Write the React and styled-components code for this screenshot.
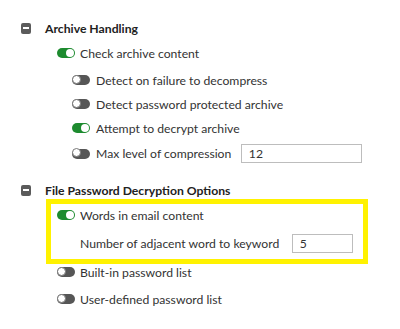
import React from "react";
import styled, { createGlobalStyle } from "styled-components";

const GlobalStyle = createGlobalStyle`
    body {
        margin: 0;
        background: #fff;
        font-family: "Lato", "Liberation Sans", sans-serif;
        font-size: 12.2px;
        color: #333;
    }
`;

const Page = styled.div`
    width: 400px;
    height: 329px;
    padding-top: 20px;
    box-sizing: border-box;
    overflow: hidden;
`;

const SectionHead = styled.div`
    display: flex;
    align-items: center;
    height: 16px;
    padding-left: 21px;
    margin-top: ${(p) => p.$top || 0}px;
    font-weight: bold;
    color: #222;
`;

const Collapse = styled.span`
    position: relative;
    width: 10px;
    height: 11px;
    border-radius: 2px;
    background: #5b5b5b;
    margin-right: 14px;
    flex-shrink: 0;
    &::after {
        content: "";
        position: absolute;
        left: 2px;
        right: 2px;
        top: 4.5px;
        height: 2px;
        background: #fff;
    }
`;

const List = styled.div`
    display: flex;
    flex-direction: column;
    gap: ${(p) => p.$gap || 0}px;
    padding-left: ${(p) => p.$indent || 0}px;
    margin-top: ${(p) => p.$top || 0}px;
`;

const Row = styled.div`
    display: flex;
    align-items: center;
    min-height: 16px;
    white-space: nowrap;
    padding-left: ${(p) => p.$indent || 0}px;
`;

const Toggle = styled.span`
    position: relative;
    width: 18px;
    height: 10px;
    border-radius: 5px;
    flex-shrink: 0;
    margin-right: ${(p) => p.$gap || 5}px;
    background: ${(p) => (p.$on ? "#1d8b2f" : "#565656")};
    &::after {
        content: "";
        position: absolute;
        top: ${(p) => (p.$on ? 1 : -0.5)}px;
        left: ${(p) => (p.$on ? 9 : -0.5)}px;
        width: ${(p) => (p.$on ? 8 : 9)}px;
        height: ${(p) => (p.$on ? 8 : 9)}px;
        border-radius: 50%;
        background: #fff;
        box-sizing: border-box;
        border: ${(p) => (p.$on ? "none" : "1px solid #777")};
    }
`;

const NumberInput = styled.input`
    box-sizing: border-box;
    width: ${(p) => p.$w}px;
    height: 19px;
    margin-left: ${(p) => p.$left}px;
    padding: 0 7px;
    border: 1px solid #bdbdbd;
    border-radius: 0;
    font-family: "Lato", "Liberation Sans", sans-serif;
    font-size: 12.2px;
    color: #333;
    outline: none;
`;

const Highlight = styled.div`
    width: 322px;
    box-sizing: border-box;
    margin-left: 46px;
    margin-top: 1px;
    border: 5px solid #fff200;
    padding: 3px 0 6px 6px;
    display: flex;
    flex-direction: column;
    gap: 11px;
`;

const Option = ({ on, gap, children }) => (
    <Row>
        <Toggle $on={on} $gap={gap} />
        {children}
    </Row>
);

export default function App() {
    return (
        <Page>
            <GlobalStyle />
            <SectionHead>
                <Collapse />
                Archive Handling
            </SectionHead>
            <List $indent={57} $top={9}>
                <Option on>Check archive content</Option>
                <List $indent={15} $top={11} $gap={8}>
                    <Option gap={6}>Detect on failure to decompress</Option>
                    <Option gap={6}>Detect password protected archive</Option>
                    <Option on gap={6}>Attempt to decrypt archive</Option>
                    <Option gap={6}>
                        Max level of compression
                        <NumberInput $w={121} $left={9.5} defaultValue="12" />
                    </Option>
                </List>
            </List>
            <SectionHead $top={19}>
                <Collapse />
                File Password Decryption Options
            </SectionHead>
            <Highlight>
                <Option on>Words in email content</Option>
                <Row $indent={23}>
                    Number of adjacent word to keyword
                    <NumberInput $w={61} $left={12.5} defaultValue="5" />
                </Row>
            </Highlight>
            <List $indent={57} $gap={11}>
                <Option>Built-in password list</Option>
                <Option>User-defined password list</Option>
            </List>
        </Page>
    );
}
